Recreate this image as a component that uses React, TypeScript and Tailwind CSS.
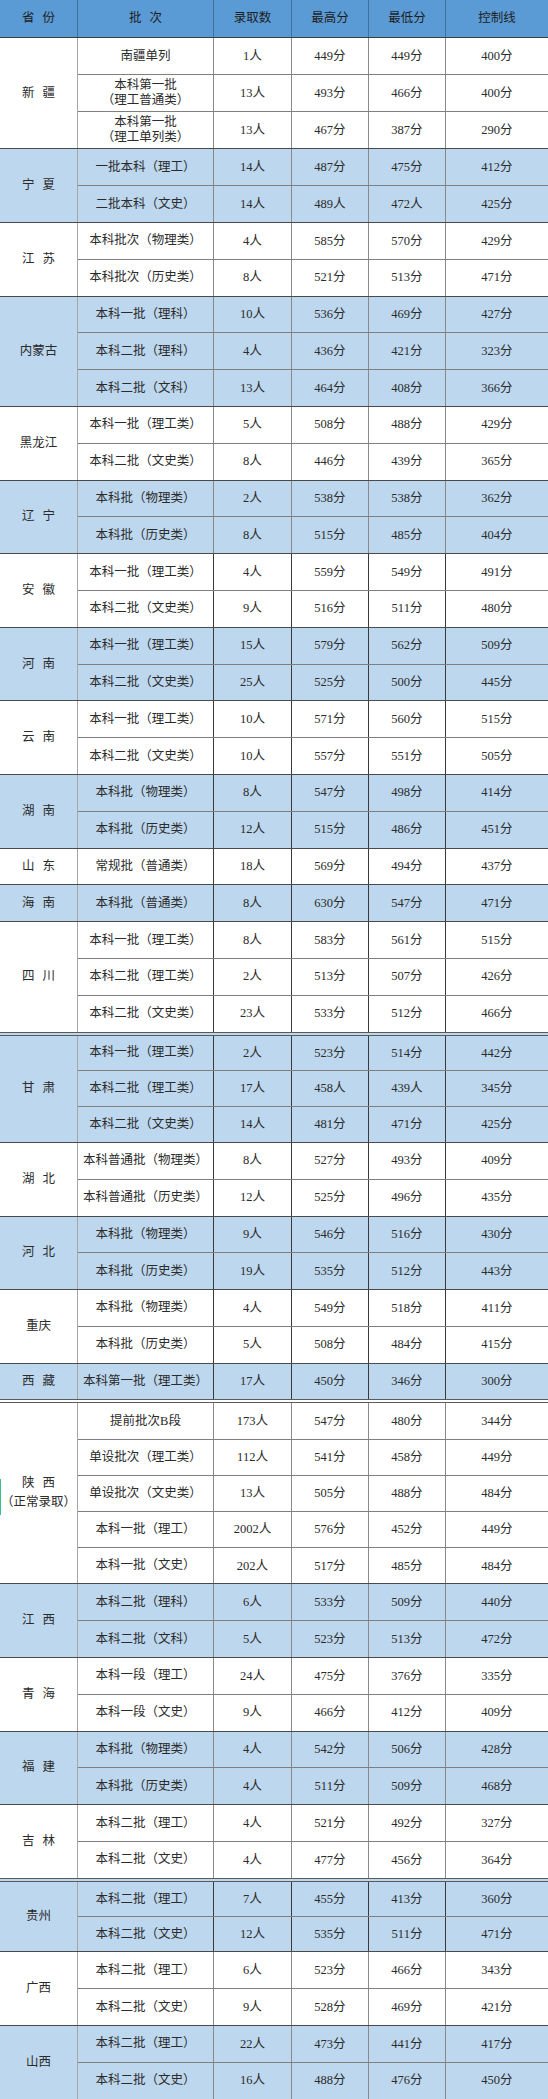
import React from 'react';

type Group = {
  name: string;
  sub?: string;
  blue: boolean;
  dark?: boolean;
  double?: boolean;
  rows: string[][];
};

const groups: Group[] = [
  {
    name: '新 疆',
    blue: false,
    rows: [
      ['南疆单列', '1人', '449分', '449分', '400分'],
      ['本科第一批\n（理工普通类）', '13人', '493分', '466分', '400分'],
      ['本科第一批\n（理工单列类）', '13人', '467分', '387分', '290分'],
    ],
  },
  {
    name: '宁 夏',
    blue: true,
    rows: [
      ['一批本科（理工）', '14人', '487分', '475分', '412分'],
      ['二批本科（文史）', '14人', '489人', '472人', '425分'],
    ],
  },
  {
    name: '江 苏',
    blue: false,
    rows: [
      ['本科批次（物理类）', '4人', '585分', '570分', '429分'],
      ['本科批次（历史类）', '8人', '521分', '513分', '471分'],
    ],
  },
  {
    name: '内蒙古',
    blue: true,
    rows: [
      ['本科一批（理科）', '10人', '536分', '469分', '427分'],
      ['本科二批（理科）', '4人', '436分', '421分', '323分'],
      ['本科二批（文科）', '13人', '464分', '408分', '366分'],
    ],
  },
  {
    name: '黑龙江',
    blue: false,
    rows: [
      ['本科一批（理工类）', '5人', '508分', '488分', '429分'],
      ['本科二批（文史类）', '8人', '446分', '439分', '365分'],
    ],
  },
  {
    name: '辽 宁',
    blue: true,
    rows: [
      ['本科批（物理类）', '2人', '538分', '538分', '362分'],
      ['本科批（历史类）', '8人', '515分', '485分', '404分'],
    ],
  },
  {
    name: '安 徽',
    blue: false,
    dark: true,
    rows: [
      ['本科一批（理工类）', '4人', '559分', '549分', '491分'],
      ['本科二批（文史类）', '9人', '516分', '511分', '480分'],
    ],
  },
  {
    name: '河 南',
    blue: true,
    dark: true,
    rows: [
      ['本科一批（理工类）', '15人', '579分', '562分', '509分'],
      ['本科二批（文史类）', '25人', '525分', '500分', '445分'],
    ],
  },
  {
    name: '云 南',
    blue: false,
    dark: true,
    rows: [
      ['本科一批（理工类）', '10人', '571分', '560分', '515分'],
      ['本科二批（文史类）', '10人', '557分', '551分', '505分'],
    ],
  },
  {
    name: '湖 南',
    blue: true,
    dark: true,
    rows: [
      ['本科批（物理类）', '8人', '547分', '498分', '414分'],
      ['本科批（历史类）', '12人', '515分', '486分', '451分'],
    ],
  },
  {
    name: '山 东',
    blue: false,
    dark: true,
    rows: [['常规批（普通类）', '18人', '569分', '494分', '437分']],
  },
  {
    name: '海 南',
    blue: true,
    dark: true,
    rows: [['本科批（普通类）', '8人', '630分', '547分', '471分']],
  },
  {
    name: '四 川',
    blue: false,
    dark: true,
    rows: [
      ['本科一批（理工类）', '8人', '583分', '561分', '515分'],
      ['本科二批（理工类）', '2人', '513分', '507分', '426分'],
      ['本科二批（文史类）', '23人', '533分', '512分', '466分'],
    ],
  },
  {
    name: '甘 肃',
    blue: true,
    dark: true,
    double: true,
    rows: [
      ['本科一批（理工类）', '2人', '523分', '514分', '442分'],
      ['本科二批（理工类）', '17人', '458人', '439人', '345分'],
      ['本科二批（文史类）', '14人', '481分', '471分', '425分'],
    ],
  },
  {
    name: '湖 北',
    blue: false,
    dark: true,
    rows: [
      ['本科普通批（物理类）', '8人', '527分', '493分', '409分'],
      ['本科普通批（历史类）', '12人', '525分', '496分', '435分'],
    ],
  },
  {
    name: '河 北',
    blue: true,
    dark: true,
    rows: [
      ['本科批（物理类）', '9人', '546分', '516分', '430分'],
      ['本科批（历史类）', '19人', '535分', '512分', '443分'],
    ],
  },
  {
    name: '重庆',
    blue: false,
    dark: true,
    rows: [
      ['本科批（物理类）', '4人', '549分', '518分', '411分'],
      ['本科批（历史类）', '5人', '508分', '484分', '415分'],
    ],
  },
  {
    name: '西 藏',
    blue: true,
    dark: true,
    rows: [['本科第一批（理工类）', '17人', '450分', '346分', '300分']],
  },
  {
    name: '陕 西',
    sub: '（正常录取）',
    blue: false,
    double: true,
    rows: [
      ['提前批次B段', '173人', '547分', '480分', '344分'],
      ['单设批次（理工类）', '112人', '541分', '458分', '449分'],
      ['单设批次（文史类）', '13人', '505分', '488分', '484分'],
      ['本科一批（理工）', '2002人', '576分', '452分', '449分'],
      ['本科一批（文史）', '202人', '517分', '485分', '484分'],
    ],
  },
  {
    name: '江 西',
    blue: true,
    rows: [
      ['本科二批（理科）', '6人', '533分', '509分', '440分'],
      ['本科二批（文科）', '5人', '523分', '513分', '472分'],
    ],
  },
  {
    name: '青 海',
    blue: false,
    rows: [
      ['本科一段（理工）', '24人', '475分', '376分', '335分'],
      ['本科一段（文史）', '9人', '466分', '412分', '409分'],
    ],
  },
  {
    name: '福 建',
    blue: true,
    rows: [
      ['本科批（物理类）', '4人', '542分', '506分', '428分'],
      ['本科批（历史类）', '4人', '511分', '509分', '468分'],
    ],
  },
  {
    name: '吉 林',
    blue: false,
    rows: [
      ['本科二批（理工）', '4人', '521分', '492分', '327分'],
      ['本科二批（文史）', '4人', '477分', '456分', '364分'],
    ],
  },
  {
    name: '贵州',
    blue: true,
    double: true,
    dark: true,
    rows: [
      ['本科二批（理工）', '7人', '455分', '413分', '360分'],
      ['本科二批（文史）', '12人', '535分', '511分', '471分'],
    ],
  },
  {
    name: '广西',
    blue: false,
    rows: [
      ['本科二批（理工）', '6人', '523分', '466分', '343分'],
      ['本科二批（文史）', '9人', '528分', '469分', '421分'],
    ],
  },
  {
    name: '山西',
    blue: true,
    rows: [
      ['本科二批（理工）', '22人', '473分', '441分', '417分'],
      ['本科二批（文史）', '16人', '488分', '476分', '450分'],
    ],
  },
];

const groupHeight: Record<number, string> = {
  1: 'h-[36.8px]',
  2: 'h-[73.6px]',
  3: 'h-[110.4px]',
  5: 'h-[184px]',
};

const Spaced = ({ text }: { text: string }) => {
  if (!text.includes(' ')) return <span>{text}</span>;
  return (
    <span className="flex gap-[8px]">
      {text.split(' ').map((c, i) => (
        <span key={i}>{c}</span>
      ))}
    </span>
  );
};

const App = () => {
  return (
    <div
      className="w-[548px] bg-white text-[12.5px] text-[#2b2b2b]"
      style={{ fontFamily: '"Liberation Serif", "Noto Sans CJK SC", serif' }}
    >
      {/* Header */}
      <div className="grid h-[38px] grid-cols-[78px_136px_78px_77px_77px_102px] border-b border-[#3c3c3c] bg-[#5b9bd5] text-[#1e1e1e]">
        <div className="flex items-center justify-center border-r border-[#41719c]">
          <Spaced text="省 份" />
        </div>
        <div className="flex items-center justify-center border-r border-[#41719c]">
          <Spaced text="批 次" />
        </div>
        <div className="flex items-center justify-center border-r border-[#41719c]">录取数</div>
        <div className="flex items-center justify-center border-r border-[#41719c]">最高分</div>
        <div className="flex items-center justify-center border-r border-[#41719c]">最低分</div>
        <div className="flex items-center justify-center">控制线</div>
      </div>

      {groups.map((g, gi) => {
        const vline = g.dark ? 'border-[#3a3a3a]' : 'border-[#8a8a8a]';
        return (
          <div
            key={g.name}
            className={`relative flex ${groupHeight[g.rows.length]} ${g.blue ? 'bg-[#bdd7ee]' : 'bg-white'} ${
              gi === 0 ? '' : g.double ? 'border-t-4 border-double border-[#5a5a5a]' : 'border-t border-[#4a4a4a]'
            }`}
          >
            {/* Province */}
            <div className="flex w-[78px] shrink-0 flex-col items-center justify-center border-r border-[#a6a6a6] leading-[19px]">
              <Spaced text={g.name} />
              {g.sub && <span>{g.sub}</span>}
            </div>
            {g.sub && <span className="absolute left-0 top-[76px] h-[36px] w-[1px] bg-[#3cc08a]" />}

            {/* Rows */}
            <div className="flex flex-1 flex-col">
              {g.rows.map((r, ri) => (
                <div
                  key={ri}
                  className={`grid flex-1 grid-cols-[136px_78px_77px_77px_102px] ${
                    ri === 0 ? '' : 'border-t border-[#7f7f7f]'
                  }`}
                >
                  <div
                    className={`flex flex-col items-center justify-center whitespace-pre border-r text-center leading-[15px] ${vline}`}
                  >
                    {r[0]}
                  </div>
                  <div className={`flex items-center justify-center border-r ${vline}`}>{r[1]}</div>
                  <div className={`flex items-center justify-center border-r ${vline}`}>{r[2]}</div>
                  <div className={`flex items-center justify-center border-r ${vline}`}>{r[3]}</div>
                  <div className="flex items-center justify-center">{r[4]}</div>
                </div>
              ))}
            </div>
          </div>
        );
      })}
    </div>
  );
};

export default App;
